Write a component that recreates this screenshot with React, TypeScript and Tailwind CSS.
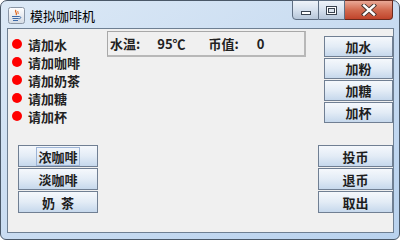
import React from "react";

const font = { fontFamily: '"Noto Sans CJK SC", "Noto Sans", sans-serif' };

function Btn({ label, focus, className }: { label: string; focus?: boolean; className: string }) {
  return (
    <div
      className={
        "flex items-center justify-center border border-[#707f93] bg-gradient-to-b from-[#f5f8fc] via-[#e3ecf6] to-[#c6d8ec] text-[13px] font-bold leading-none text-[#1e1e1e] whitespace-pre " +
        className
      }
    >
      {focus ? (
        <span className="border border-[#9db4d6] px-[1px] py-[2px]">{label}</span>
      ) : (
        <span>{label}</span>
      )}
    </div>
  );
}

function JavaIcon() {
  return (
    <svg width="17" height="17" viewBox="0 0 17 17">
      <defs>
        <linearGradient id="ig" x1="0" y1="0" x2="0" y2="1">
          <stop offset="0" stopColor="#ffffff" />
          <stop offset="1" stopColor="#d4dbe4" />
        </linearGradient>
      </defs>
      <rect x="0.5" y="0.5" width="16" height="16" rx="2" fill="url(#ig)" stroke="#8a96a6" />
      <path d="M8 3 C6 5 10 6 8 8" stroke="#e0661c" strokeWidth="1.3" fill="none" />
      <path d="M10 4 C9 5 11 6 10 7" stroke="#e0661c" strokeWidth="1" fill="none" />
      <path d="M4 9.5 H11 M4.5 11.5 H10.5 M5 13.5 H10" stroke="#3d6aa8" strokeWidth="1.1" />
      <path d="M11 9.5 C13.5 9.5 13.5 11.8 10.5 11.8" stroke="#3d6aa8" strokeWidth="1" fill="none" />
    </svg>
  );
}

export default function App() {
  const items = ["请加水", "请加咖啡", "请加奶茶", "请加糖", "请加杯"];
  return (
    <div className="w-[400px] h-[240px] overflow-hidden bg-white" style={font}>
      <div className="relative flex h-[240px] w-[400px] flex-col rounded-t-[7px] rounded-b-[6px] border border-[#4a5868] bg-gradient-to-br from-[#dce9f6] via-[#c9dcf1] to-[#b9d2ee]">
        {/* title bar */}
        <div className="flex h-[27px] shrink-0 items-center pl-[7px]">
          <div className="mt-[1px]">
            <JavaIcon />
          </div>
          <span className="ml-[5px] mt-[1px] text-[13px] leading-none text-black">模拟咖啡机</span>
        </div>
        {/* window controls */}
        <div className="absolute right-[6px] top-[-1px] flex h-[20px]">
          <div className="flex w-[27px] items-center justify-center rounded-bl-[4px] border border-[#5e6e82] bg-gradient-to-b from-[#eef3f9] via-[#d6e1ee] to-[#b6c6d9]">
            <div className="mt-[5px] h-[4px] w-[10px] border border-[#3a4450] bg-white" />
          </div>
          <div className="flex w-[26px] items-center justify-center border-y border-r border-[#5e6e82] bg-gradient-to-b from-[#eef3f9] via-[#d6e1ee] to-[#b6c6d9]">
            <div className="h-[9px] w-[11px] border border-[#3a4450] bg-white p-[1px]">
              <div className="h-full w-full border border-[#3a4450] bg-[#dde5ee]" />
            </div>
          </div>
          <div className="flex w-[48px] items-center justify-center rounded-br-[4px] border-y border-r border-[#6b2a1d] bg-gradient-to-b from-[#e9a896] via-[#d26a4f] to-[#c0432a]">
            <svg width="16" height="12" viewBox="0 0 16 12">
              <path d="M3 1.5 L13 10.5 M13 1.5 L3 10.5" stroke="#40302c" strokeWidth="4.2" strokeLinecap="square" />
              <path d="M3 1.5 L13 10.5 M13 1.5 L3 10.5" stroke="#ffffff" strokeWidth="2.4" strokeLinecap="square" />
            </svg>
          </div>
        </div>
        {/* content */}
        <div className="ml-[6px] mr-[5px] flex h-[205px] flex-col border border-[#6e7f92] bg-[#f0f0f0]">
          <div className="flex items-start">
            <div className="flex w-[99px] flex-col pl-[4px] pt-[6px]">
              {items.map((t) => (
                <div key={t} className="flex h-[18px] items-center">
                  <div className="h-[10px] w-[10px] rounded-full bg-[#ff0000]" />
                  <span className="ml-[6px] text-[13px] font-bold leading-none text-[#222]">{t}</span>
                </div>
              ))}
            </div>
            <div className="mt-[2px] flex h-[26px] w-[199px] items-center border-t border-l border-[#a8a8a8] border-b-2 border-r-2 border-b-[#b8b8b8] border-r-[#b8b8b8] text-[13px] font-bold leading-none text-[#222]">
              <span className="ml-[2px]">水温:</span>
              <span className="ml-[17px]">95℃</span>
              <span className="ml-[23px]">币值:</span>
              <span className="ml-[18px]">0</span>
            </div>
            <div className="ml-auto mt-[7px] flex w-[69px] flex-col gap-[1px]">
              <Btn label="加水" className="h-[21px]" />
              <Btn label="加粉" className="h-[21px]" />
              <Btn label="加糖" className="h-[21px]" />
              <Btn label="加杯" className="h-[21px]" />
            </div>
          </div>
          <div className="mt-[20px] flex items-start justify-between">
            <div className="ml-[10px] flex w-[80px] flex-col gap-[1px]">
              <Btn label="浓咖啡" focus className="h-[22px]" />
              <Btn label="淡咖啡" className="h-[22px]" />
              <Btn label="奶  茶" className="h-[22px]" />
            </div>
            <div className="flex w-[75px] flex-col gap-[1px]">
              <Btn label="投币" className="h-[22px]" />
              <Btn label="退币" className="h-[22px]" />
              <Btn label="取出" className="h-[22px]" />
            </div>
          </div>
        </div>
      </div>
    </div>
  );
}
